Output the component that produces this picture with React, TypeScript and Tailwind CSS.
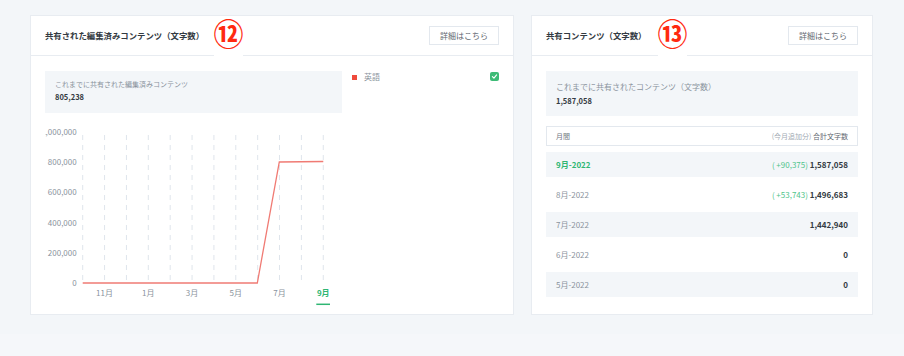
import React from "react";

const FONT = { fontFamily: '"Noto Sans CJK JP", "Noto Sans", sans-serif' };

function Badge({ n, left }: { n: string; left: number }) {
  return (
    <div
      className="absolute top-0 h-[41px] w-[29px] bg-white flex items-start justify-center"
      style={{ left }}
    >
      <span className="mt-[1px] text-[30px] leading-[30px] font-bold text-[#ff2a10]">{n}</span>
    </div>
  );
}

function Header({ title, badge, badgeLeft }: { title: string; badge: string; badgeLeft: number }) {
  return (
    <div className="relative h-[40px] border-b border-[#e8ecf1] px-[14px] flex items-center justify-between">
      <span className="text-[8.4px] font-bold text-[#333a42] relative z-10">{title}</span>
      <Badge n={badge} left={badgeLeft} />
      <button className="relative z-10 w-[70px] h-[19px] border border-[#e3e8ee] bg-white text-[8px] text-[#5f6770] flex items-center justify-center">
        詳細はこちら
      </button>
    </div>
  );
}

function Chart() {
  const labels = ["1,000,000", "800,000", "600,000", "400,000", "200,000", "0"];
  const xs = Array.from({ length: 12 }, (_, i) => 37.7 + 21.87 * i);
  const months = ["11月", "1月", "3月", "5月", "7月", "9月"];
  return (
    <svg width="297" height="190" className="block overflow-hidden">
      {labels.map((l, i) => (
        <text
          key={l}
          x={31.7}
          y={12.3 + 30.1 * i + 2.9}
          textAnchor="end"
          fontSize="8"
          fill="#8a939d"
          style={FONT}
        >
          {l}
        </text>
      ))}
      {xs.map((x, i) => (
        <line key={i} x1={x} x2={x} y1={15} y2={163} stroke="#dfe5ec" strokeWidth="1" strokeDasharray="5 5" />
      ))}
      <polyline
        points="37.7,163 212.3,163 234.3,42 278.3,41.5"
        fill="none"
        stroke="#f07b74"
        strokeWidth="1.3"
      />
      {months.map((m, i) => {
        const x = xs[1 + i * 2];
        const last = i === months.length - 1;
        return (
          <text
            key={m}
            x={x}
            y={175.6}
            textAnchor="middle"
            fontSize="8"
            fontWeight={last ? 700 : 400}
            fill={last ? "#2fb673" : "#8a939d"}
            style={FONT}
          >
            {m}
          </text>
        );
      })}
      <line x1={271.3} x2={285} y1={184.3} y2={184.3} stroke="#2fb673" strokeWidth="1.5" />
    </svg>
  );
}

const rows = [
  { m: "9月-2022", add: "( +90,375)", total: "1,587,058", cur: true, bg: true },
  { m: "8月-2022", add: "( +53,743)", total: "1,496,683", cur: false, bg: false },
  { m: "7月-2022", add: "", total: "1,442,940", cur: false, bg: true },
  { m: "6月-2022", add: "", total: "0", cur: false, bg: false },
  { m: "5月-2022", add: "", total: "0", cur: false, bg: true },
];

export default function App() {
  return (
    <div className="w-[904px] h-[356px] bg-[#f3f6f9] relative overflow-hidden" style={FONT}>
      <div className="flex gap-[17px] pt-[15px] pl-[30px]">
        {/* Left card */}
        <div className="w-[484px] h-[300px] bg-white border border-[#e8ecf1]">
          <Header title="共有された編集済みコンテンツ（文字数）" badge="⑫" badgeLeft={183} />
          <div className="px-[14px] pt-[15px] flex gap-[10px]">
            <div className="w-[297px]">
              <div className="h-[42px] bg-[#f3f6f9] pl-[10px] pt-[8px] flex flex-col">
                <span className="text-[7px] leading-[10px] text-[#8a939d]">これまでに共有された編集済みコンテンツ</span>
                <span className="mt-[3px] text-[7.5px] leading-[10px] font-bold text-[#333a42]">805,238</span>
              </div>
              <div className="mt-[7px]">
                <Chart />
              </div>
            </div>
            <div className="flex-1 h-[10px] flex items-center justify-between">
              <div className="flex items-center gap-[7px] pt-[2px]">
                <span className="w-[5px] h-[5px] bg-[#ef4a3c]" />
                <span className="text-[8px] text-[#8a939d]">英語</span>
              </div>
              <span className="w-[9px] h-[9px] rounded-[2px] bg-[#3dbb76] flex items-center justify-center">
                <svg width="7" height="7" viewBox="0 0 10 10">
                  <path d="M2 5.2 L4.2 7.3 L8 2.8" fill="none" stroke="white" strokeWidth="1.6" strokeLinecap="round" strokeLinejoin="round" />
                </svg>
              </span>
            </div>
          </div>
        </div>

        {/* Right card */}
        <div className="w-[342px] h-[300px] bg-white border border-[#e8ecf1]">
          <Header title="共有コンテンツ（文字数）" badge="⑬" badgeLeft={126} />
          <div className="px-[14px] pt-[15px]">
            <div className="h-[45px] bg-[#f3f6f9] pl-[10px] pt-[11px] flex flex-col">
              <span className="text-[8px] leading-[10px] text-[#8a939d]">これまでに共有されたコンテンツ（文字数）</span>
              <span className="mt-[4px] text-[7.5px] leading-[10px] font-bold text-[#333a42]">1,587,058</span>
            </div>
            <div className="mt-[10px] h-[20px] border border-[#e3e8ee] px-[9px] flex items-center justify-between">
              <span className="text-[7px] text-[#6f7780]">月間</span>
              <span className="text-[7px]">
                <span className="text-[#a3abb4]">(今月追加分) </span>
                <span className="text-[#5f6770]">合計文字数</span>
              </span>
            </div>
            <div className="mt-[6px] flex flex-col gap-[5px]">
              {rows.map((r) => (
                <div
                  key={r.m}
                  className={`h-[25px] px-[10px] flex items-center justify-between ${r.bg ? "bg-[#f3f6f9]" : "bg-white"}`}
                >
                  <span className={`text-[8px] ${r.cur ? "font-bold text-[#2fb673]" : "text-[#8a939d]"}`}>{r.m}</span>
                  <span className="text-[8px]">
                    {r.add && <span className="text-[#4fc48a]">{r.add} </span>}
                    <span className="font-bold text-[#333a42]">{r.total}</span>
                  </span>
                </div>
              ))}
            </div>
          </div>
        </div>
      </div>
      <div className="absolute left-0 right-0 bottom-0 h-[22px] bg-[#f5f7fa]" />
    </div>
  );
}
